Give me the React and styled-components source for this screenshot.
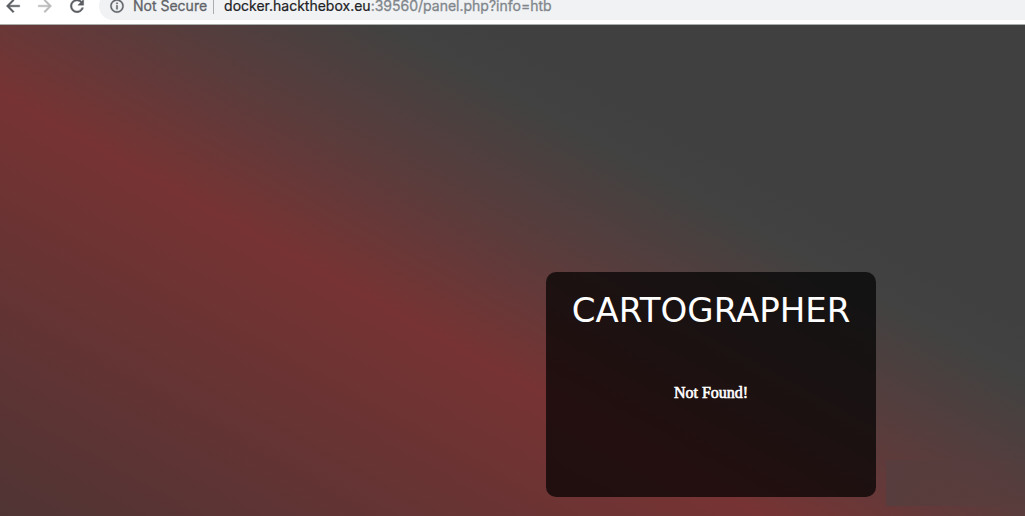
import React from "react";
import styled, { createGlobalStyle } from "styled-components";
import { MdArrowBack, MdArrowForward, MdRefresh, MdInfoOutline } from "react-icons/md";

const GlobalStyle = createGlobalStyle`
  * { box-sizing: border-box; }
  body { margin: 0; background: #404040; }
`;

const Page = styled.div`
  display: flex;
  flex-direction: column;
  min-height: 100vh;
`;

const Toolbar = styled.header`
  display: flex;
  align-items: flex-end;
  height: 25px;
  padding-bottom: 4px;
  overflow: hidden;
  background: #fff;
  border-bottom: 1px solid #a9aeab;
  font-family: Inter, "Liberation Sans", sans-serif;
  font-size: 14px;
  line-height: 28px;

  svg path:not([fill="none"]) {
    stroke: currentColor;
    stroke-width: 0.5px;
  }
`;

const Nav = styled.nav`
  display: flex;
  gap: 6px;
  margin-right: 9px;
`;

const NavButton = styled.button`
  display: flex;
  align-items: center;
  justify-content: center;
  width: 26px;
  height: 28px;
  padding: 0;
  border: 0;
  background: none;
  color: ${(p) => (p.disabled ? "#bababa" : "#5a5d61")};

  svg {
    stroke: none;
  }
`;

const AddressBar = styled.div`
  display: flex;
  flex: 1;
  align-items: center;
  height: 28px;
  padding-left: 10px;
  border-radius: 14px 0 0 14px;
  background: #f1f2f4;
  white-space: nowrap;
  -webkit-text-stroke: 0.3px currentColor;
`;

const SiteInfo = styled.button`
  display: flex;
  align-items: center;
  gap: 8px;
  padding: 0;
  border: 0;
  background: none;
  color: #5f6368;
  font: inherit;

  svg {
    stroke: none;
  }
`;

const Divider = styled.span`
  width: 1px;
  height: 16px;
  margin: 0 10px 0 6px;
  background: #a9acb0;
`;

const Address = styled.span`
  color: #80868b;
`;

const Host = styled.span`
  color: #202124;
  -webkit-text-stroke: 0.2px currentColor;
`;

const Stage = styled.main`
  display: grid;
  flex: 1;
  grid-template-columns: 1fr 330px 139px;
  column-gap: 10px;
  align-items: end;
  padding-bottom: 10px;
  background: linear-gradient(
    209deg,
    #404040 0,
    #404040 260px,
    #414241 308px,
    #5a3c3c 428px,
    #773333 556px,
    #503434 926px
  );
`;

const Card = styled.section`
  grid-column: 2;
  display: flex;
  flex-direction: column;
  align-items: center;
  height: 225px;
  margin-bottom: 9px;
  padding-top: 18px;
  border-radius: 10px;
  background: rgba(0, 0, 0, 0.7);
  color: #fff;
`;

const Title = styled.h1`
  margin: 0;
  font-family: "DejaVu Sans", sans-serif;
  font-size: 34px;
  font-weight: 400;
  line-height: 40px;
`;

const Message = styled.p`
  margin: 53px 0 0;
  font-family: "Liberation Serif", serif;
  font-size: 16px;
  font-weight: 400;
  line-height: 20px;
  -webkit-text-stroke: 0.6px #fff;
`;

const Patch = styled.div`
  height: 46px;
  background: linear-gradient(to right, #573d3d, rgba(87, 61, 61, 0.6) 80%, transparent);
`;

export default function App() {
  return (
    <Page>
      <GlobalStyle />
      <Toolbar>
        <Nav aria-label="Browser">
          <NavButton aria-label="Back"><MdArrowBack size={20} /></NavButton>
          <NavButton aria-label="Forward" disabled><MdArrowForward size={20} /></NavButton>
          <NavButton aria-label="Reload"><MdRefresh size={20} /></NavButton>
        </Nav>
        <AddressBar>
          <SiteInfo><MdInfoOutline size={16} />Not Secure</SiteInfo>
          <Divider />
          <Address><Host>docker.hackthebox.eu</Host>:39560/panel.php?info=htb</Address>
        </AddressBar>
      </Toolbar>
      <Stage>
        <Card>
          <Title>CARTOGRAPHER</Title>
          <Message>Not Found!</Message>
        </Card>
        <Patch />
      </Stage>
    </Page>
  );
}
